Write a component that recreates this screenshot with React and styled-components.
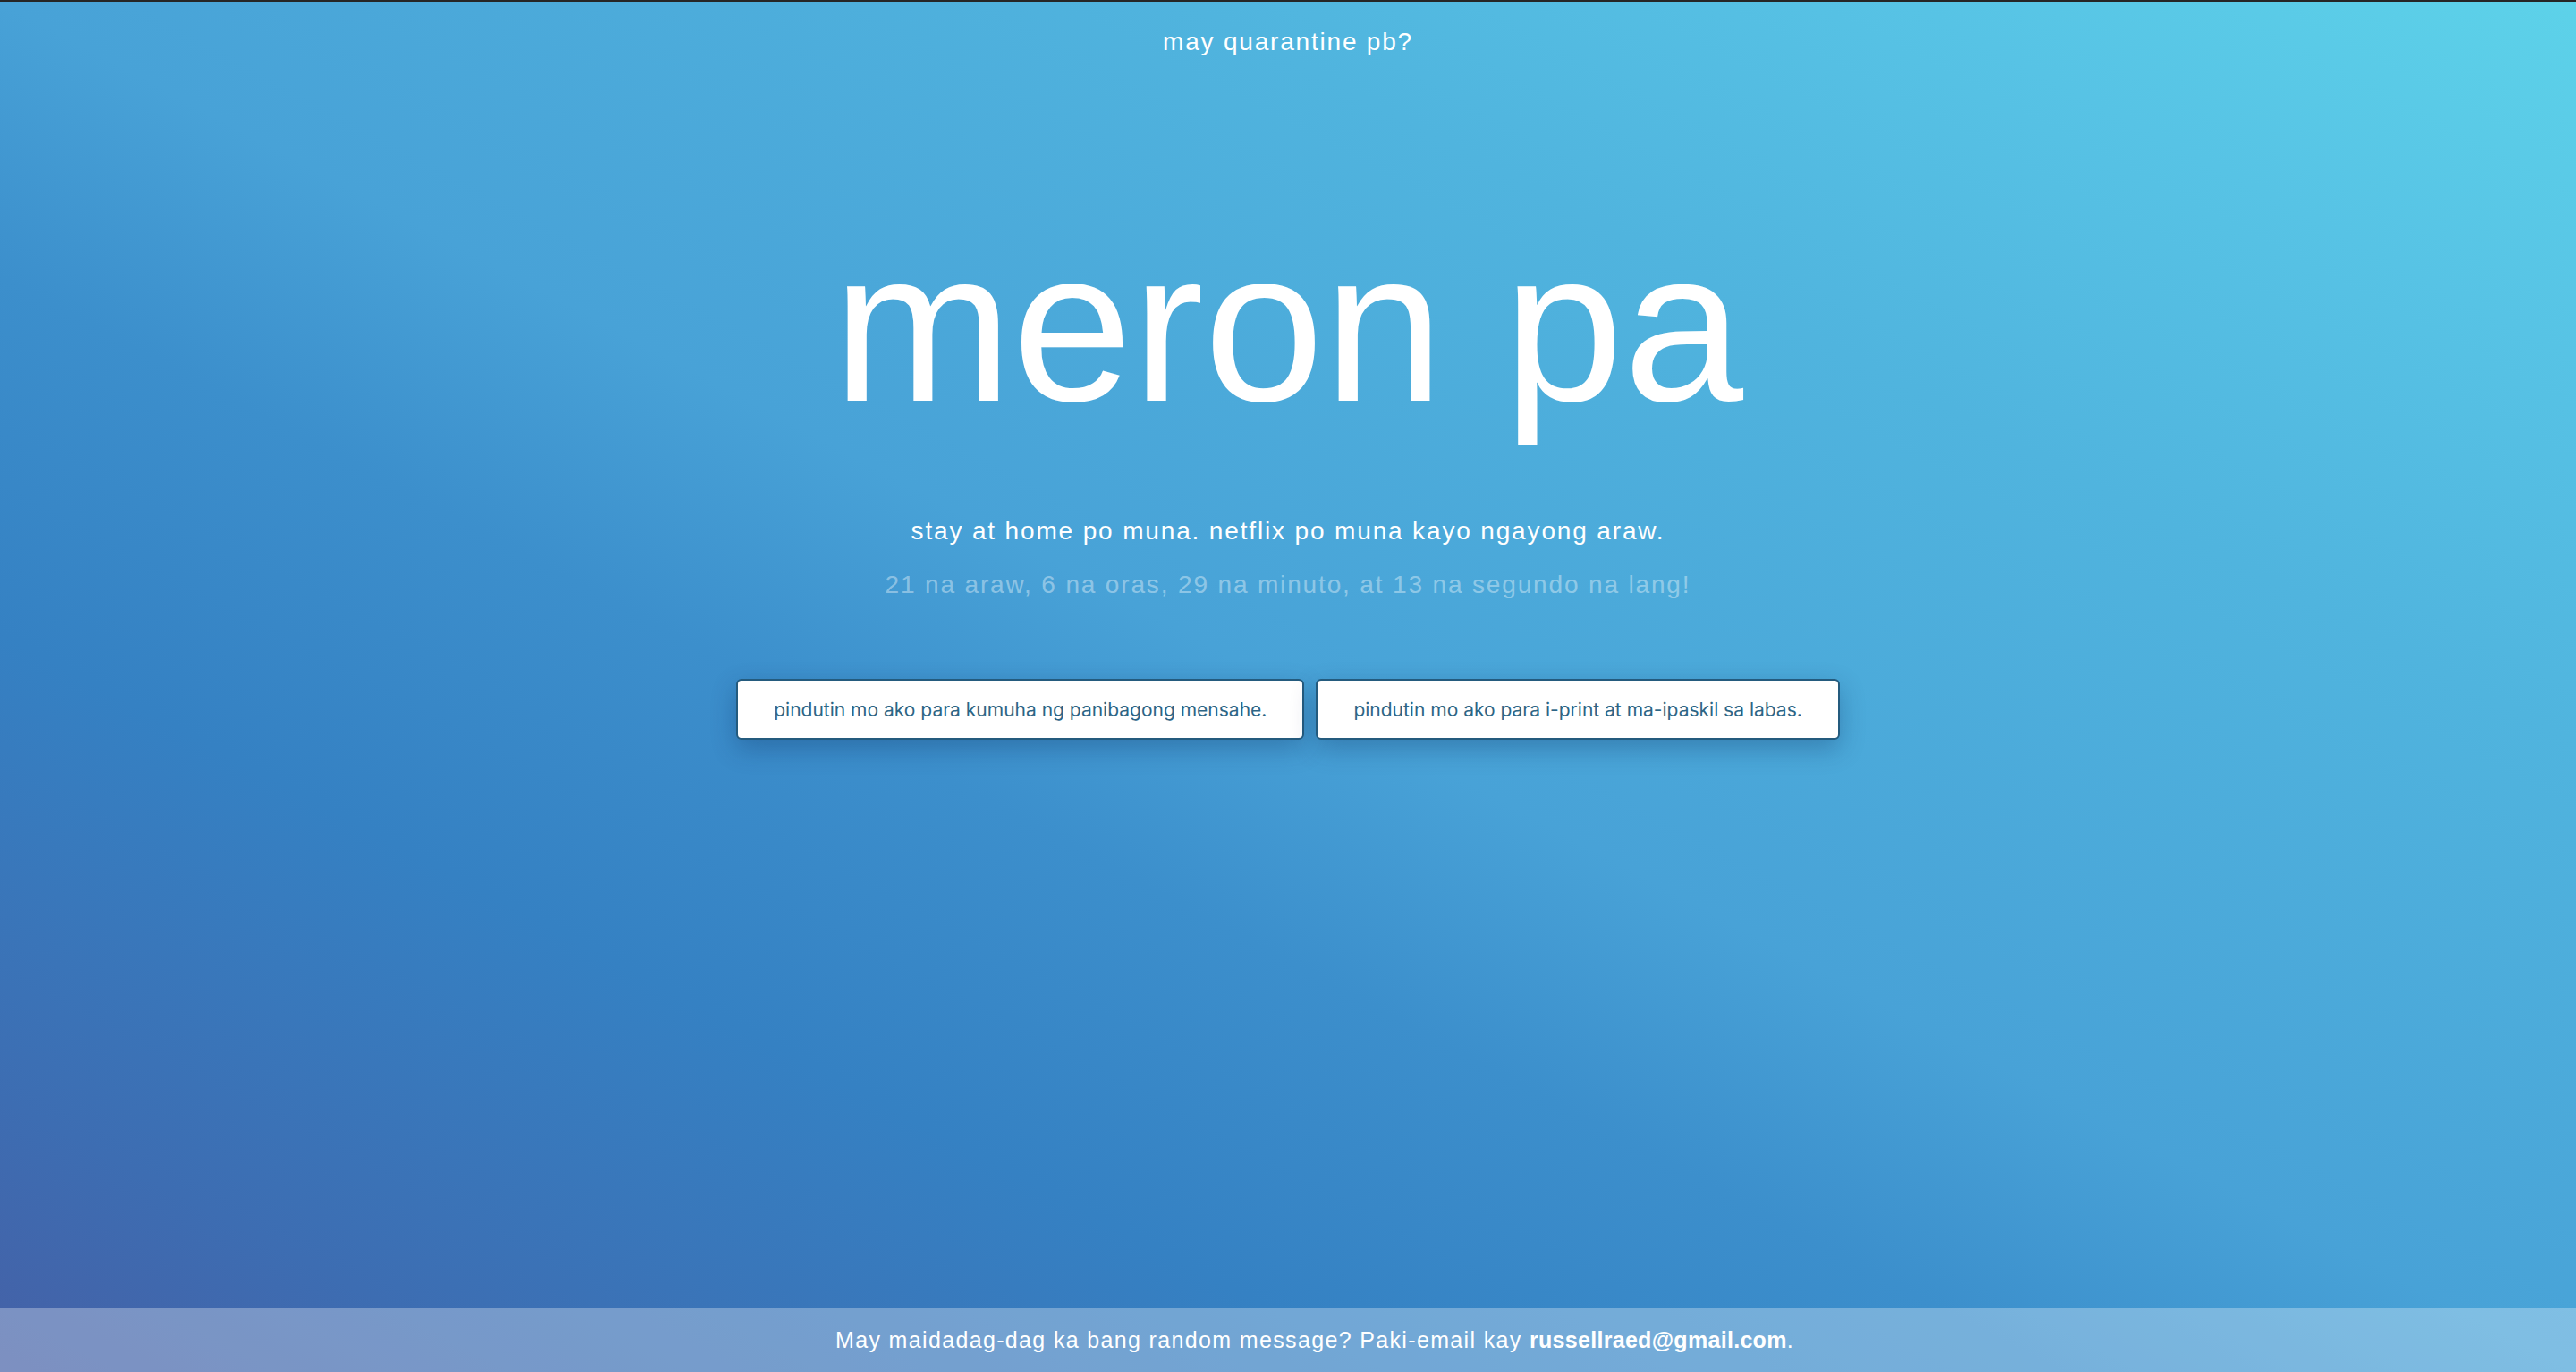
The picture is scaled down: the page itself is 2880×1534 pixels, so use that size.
import React from "react";
import styled, { createGlobalStyle } from "styled-components";

const GlobalStyle = createGlobalStyle`
  html, body {
    margin: 0;
    padding: 0;
    height: 100%;
  }
  body {
    font-family: "Liberation Sans", Arial, sans-serif;
  }
`;

const Page = styled.div`
  display: flex;
  flex-direction: column;
  min-height: 100vh;
  box-sizing: border-box;
  border-top: 2px solid #262626;
  color: #ffffff;
  background: linear-gradient(
    to top right,
    #4560a6 0%,
    #3d6db2 10%,
    #3581c3 27%,
    #3c8fcc 40%,
    #48a2d7 50%,
    #50b4de 73%,
    #57c3e5 87%,
    #5dd2e9 100%
  );
`;

const Header = styled.header`
  padding-top: 28px;
  text-align: center;
  font-size: 28px;
  line-height: 34px;
  letter-spacing: 1.8px;
`;

const Main = styled.main`
  flex: 1;
  display: flex;
  flex-direction: column;
  align-items: center;
`;

const Headline = styled.h1`
  margin: 180px 0 0;
  font-size: 241px;
  line-height: 241px;
  font-weight: 400;
  letter-spacing: 0;
`;

const Line = styled.p`
  margin: ${(p) => p.$top}px 0 0;
  font-size: 28px;
  line-height: 34px;
  letter-spacing: 1.85px;
  color: ${(p) => (p.$faded ? "rgba(255, 255, 255, 0.4)" : "#ffffff")};
`;

const ButtonRow = styled.div`
  display: flex;
  gap: 13px;
  margin-top: 88px;
`;

const Button = styled.button`
  height: 68px;
  padding: 0 40px;
  background: #ffffff;
  border: 2px solid #245b7e;
  border-radius: 6px;
  box-shadow: 0 10px 28px rgba(10, 40, 90, 0.3);
  color: #2d6585;
  font-family: Inter, "Noto Sans", sans-serif;
  font-size: 21px;
  cursor: pointer;
`;

const Footer = styled.footer`
  height: 72px;
  line-height: 72px;
  padding-left: 60px;
  text-align: center;
  background: rgba(255, 255, 255, 0.3);
  font-size: 25px;
  letter-spacing: 1.35px;
`;

const Email = styled.b`
  font-weight: 700;
  letter-spacing: 0.3px;
`;

export default function App() {
  return (
    <>
      <GlobalStyle />
      <Page>
        <Header>may quarantine pb?</Header>
        <Main>
          <Headline>meron pa</Headline>
          <Line $top={92}>stay at home po muna. netflix po muna kayo ngayong araw.</Line>
          <Line $top={26} $faded>
            21 na araw, 6 na oras, 29 na minuto, at 13 na segundo na lang!
          </Line>
          <ButtonRow>
            <Button>pindutin mo ako para kumuha ng panibagong mensahe.</Button>
            <Button>pindutin mo ako para i-print at ma-ipaskil sa labas.</Button>
          </ButtonRow>
        </Main>
        <Footer>
          May maidadag-dag ka bang random message? Paki-email kay{" "}
          <Email>russellraed@gmail.com</Email>.
        </Footer>
      </Page>
    </>
  );
}
